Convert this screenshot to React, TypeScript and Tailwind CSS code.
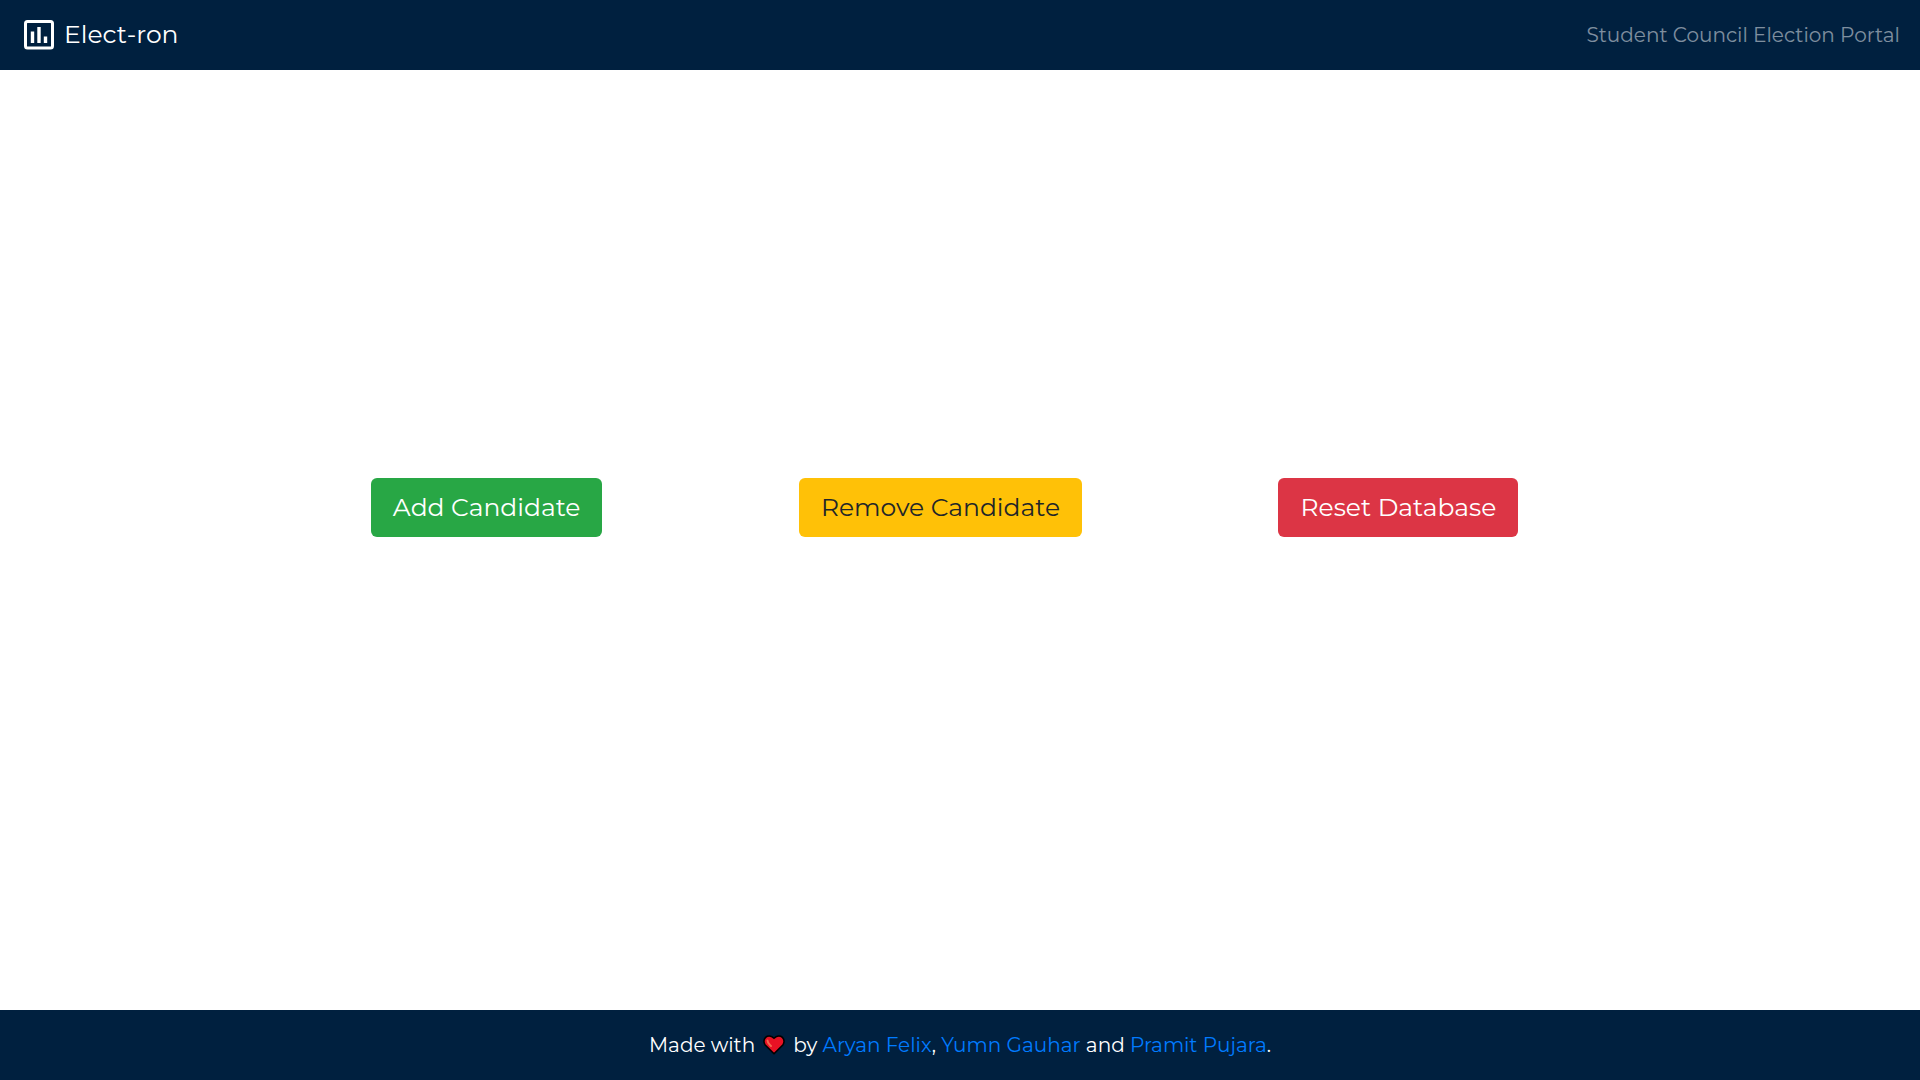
const people = [
  { name: 'Aryan Felix', after: ', ' },
  { name: 'Yumn Gauhar', after: ' and ' },
  { name: 'Pramit Pujara', after: '.' },
];

function PollIcon() {
  return (
    <svg viewBox="0 0 30 30" className="size-[30px]" fill="none" aria-hidden="true">
      <rect x="1.5" y="1.5" width="27" height="26.5" rx="2" stroke="#fff" strokeWidth="3" />
      <path d="M8.5 11.5v11.5M15 7v16M21.5 16.5v6.5" stroke="#fff" strokeWidth="3.4" />
    </svg>
  );
}

function Heart() {
  return (
    <svg viewBox="0 0 22 20" className="mx-2 inline-block h-5 w-[22px] align-[-3px]" role="img" aria-label="love">
      <path
        d="M11 18.8 2.2 10C.4 7.8.5 4.2 2.6 2.3 4.8.4 8.3.6 11 3.3 13.7.6 17.2.4 19.4 2.3c2.1 1.9 2.200 5.5.4 7.7Z"
        fill="#e81224"
        stroke="#000"
        strokeWidth="1.6"
        strokeLinejoin="round"
      />
      <path d="M4.5 5.5c0 2.5 1.5 3.5 3.5 5.5" fill="none" stroke="#f4694f" strokeWidth="2" strokeLinecap="round" />
    </svg>
  );
}

const buttonBase = 'cursor-pointer whitespace-nowrap rounded-md px-[22px] py-3 text-[25px] leading-[35px]';

export default function App() {
  return (
    <div className="flex min-h-screen flex-col bg-white font-['Montserrat','Inter',sans-serif]">
      <header className="flex h-[70px] items-center justify-between bg-[#00203f] px-5">
        <a href="#" className="ml-1 flex items-center gap-2.5 text-[25px] text-white">
          <PollIcon />
          Elect-ron
        </a>
        <span className="text-xl text-white/50">Student Council Election Portal</span>
      </header>
      <main className="flex flex-1 items-center justify-around pr-[15.8%] pb-[66px] pl-[14.2%]">
        <button type="button" className={`${buttonBase} bg-[#28a745] text-white`}>Add Candidate</button>
        <button type="button" className={`${buttonBase} bg-[#ffc107] text-[#212529]`}>Remove Candidate</button>
        <button type="button" className={`${buttonBase} bg-[#dc3545] text-white`}>Reset Database</button>
      </main>
      <footer className="flex h-[70px] items-center justify-center bg-[#00203f] text-xl text-white">
        <p>
          Made with
          <Heart />
          by{' '}
          {people.map((p) => (
            <span key={p.name}>
              <a href="#" className="text-[#007bff]">{p.name}</a>
              {p.after}
            </span>
          ))}
        </p>
      </footer>
    </div>
  );
}
